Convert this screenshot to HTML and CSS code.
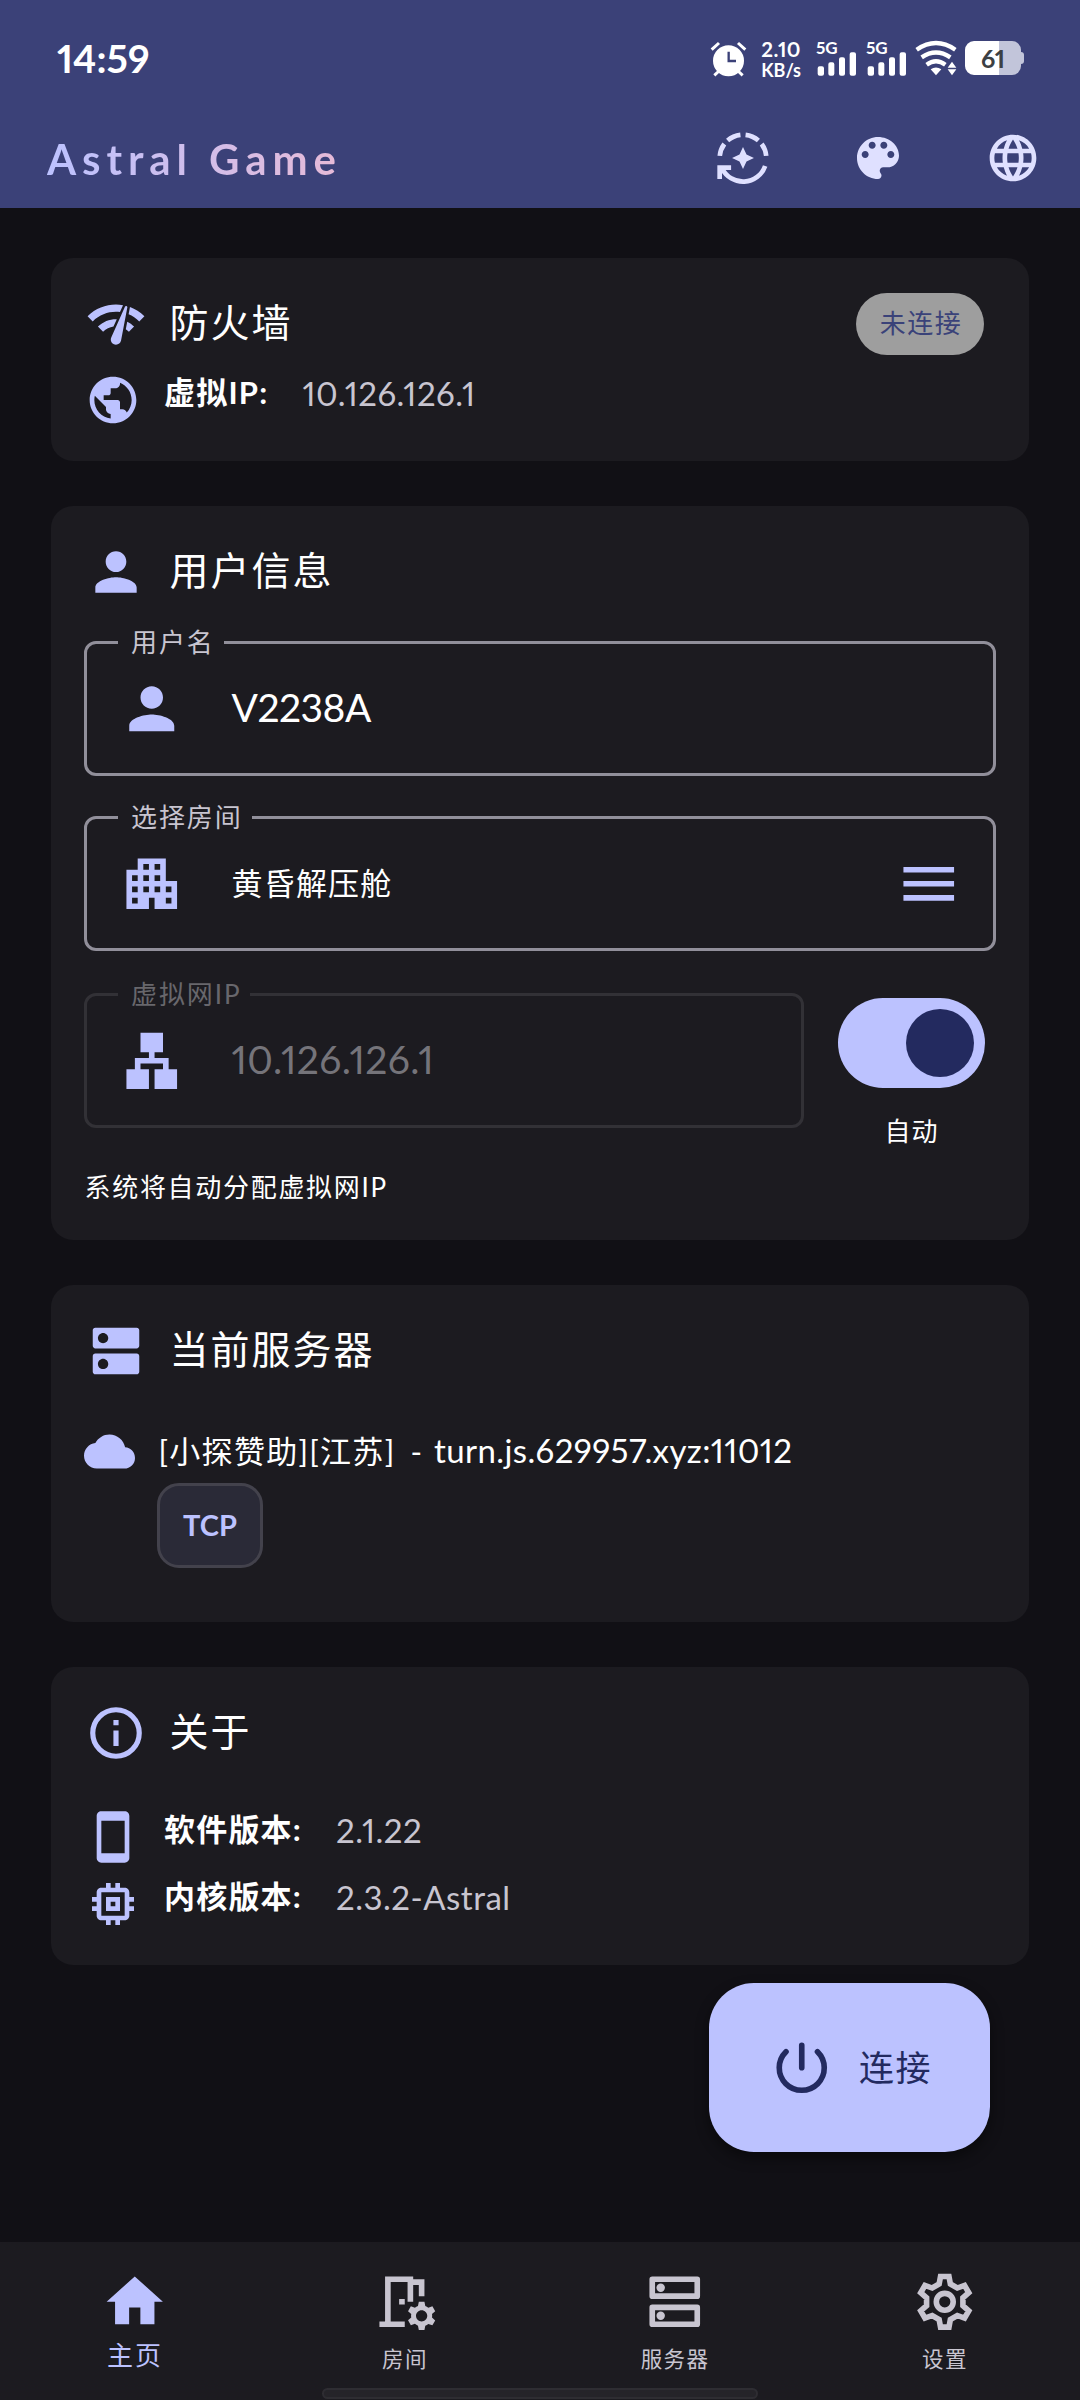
FILE: index.html
```html
<!DOCTYPE html>
<html lang="zh-CN">
<head>
<meta charset="utf-8">
<title>Astral Game</title>
<link rel="stylesheet" href="styles.css">
</head>
<body>
<div class="screen">
  <header class="header">
    <div class="status">
      <span class="clock">14:59</span>
      <div class="status-icons">
        <svg class="st-alarm" viewBox="90 120 111 111"><circle cx="145.500" cy="182" r="46.500" fill="#fff"/><path d="M146 155v28h22" fill="none" stroke="#3b4178" stroke-width="7"/><path d="M95 149l22-20M196 149l-22-20M103 226l14-13M188 226l-14-13" stroke="#fff" stroke-width="9" fill="none"/></svg>
        <div class="speed"><span class="speed-n">2.10</span><span class="speed-u">KB/s</span></div>
        <div class="signal"><span class="net">5G</span><svg class="bars" viewBox="0 0 120 75"><path d="M11 43h7a6 6 0 0 1 6 6v16a6 6 0 0 1-6 6h-7a6 6 0 0 1-6-6V49a6 6 0 0 1 6-6zM43 31h6a6 6 0 0 1 6 6v28a6 6 0 0 1-6 6h-6a6 6 0 0 1-6-6V37a6 6 0 0 1 6-6zM75 16h6a6 6 0 0 1 6 6v43a6 6 0 0 1-6 6h-6a6 6 0 0 1-6-6V22a6 6 0 0 1 6-6zM107 1h7a6 6 0 0 1 6 6v58a6 6 0 0 1-6 6h-7a6 6 0 0 1-6-6V7a6 6 0 0 1 6-6z"/></svg></div>
        <div class="signal"><span class="net">5G</span><svg class="bars" viewBox="0 0 120 75"><path d="M11 43h7a6 6 0 0 1 6 6v16a6 6 0 0 1-6 6h-7a6 6 0 0 1-6-6V49a6 6 0 0 1 6-6zM43 31h6a6 6 0 0 1 6 6v28a6 6 0 0 1-6 6h-6a6 6 0 0 1-6-6V37a6 6 0 0 1 6-6zM75 16h6a6 6 0 0 1 6 6v43a6 6 0 0 1-6 6h-6a6 6 0 0 1-6-6V22a6 6 0 0 1 6-6zM107 1h7a6 6 0 0 1 6 6v58a6 6 0 0 1-6 6h-7a6 6 0 0 1-6-6V7a6 6 0 0 1 6-6z"/></svg></div>
        <svg class="st-wifi" viewBox="705 120 126 111"><g fill="none" stroke="#fff" stroke-width="13"><path d="M710 149q58-40 116 0"/><path d="M725 172q43-29 86 0"/><path d="M740 194q28-20 56 0"/></g><path d="M752 208q16-11 32 0l-16 18z" fill="#fff"/><path d="M816 172l20 30v30h-39v-30z" fill="#3b4178"/><path d="M803 203l13-18 13 18zM803 208l13 18 13-18z" fill="#fff"/></svg>
        <div class="battery"><span>61</span></div>
      </div>
    </div>
    <div class="appbar">
      <h1 class="brand">Astral Game</h1>
      <div class="actions">
        <svg class="i20" viewBox="0 0 24 24"><g fill="none" stroke="currentColor" stroke-width="2"><path d="M21.500 15.400A10 10 0 0 1 3 16.400"/><path d="M13.100 2.060A10 10 0 0 1 18.600 4.500M20 6A10 10 0 0 1 21.950 11.100M10.900 2.060A10 10 0 0 0 5.400 4.500M4 6A10 10 0 0 0 2.050 11.100"/><path d="M2 21v-4.900h4.900"/></g><path d="M12 7.300l1.500 3.200 3.200 1.500-3.200 1.500L12 16.700l-1.500-3.200L7.300 12l3.200-1.500z"/></svg>
        <svg class="i20" viewBox="0 0 24 24"><path d="M12 3c-4.970 0-9 4.030-9 9s4.030 9 9 9c.83 0 1.500-.67 1.500-1.500 0-.39-.15-.74-.39-1.010-.23-.26-.38-.61-.38-.99 0-.83.67-1.500 1.500-1.500H16c2.760 0 5-2.240 5-5 0-4.420-4.030-8-9-8zm-5.500 9c-.83 0-1.500-.67-1.500-1.500S5.670 9 6.500 9 8 9.670 8 10.500 7.330 12 6.500 12zm3-4C8.670 8 8 7.330 8 6.500S8.670 5 9.500 5s1.500.67 1.500 1.500S10.330 8 9.500 8zm5 0c-.83 0-1.500-.67-1.500-1.500S13.670 5 14.500 5s1.500.67 1.500 1.500S15.330 8 14.500 8zm3 4c-.83 0-1.500-.67-1.500-1.500S16.670 9 17.500 9s1.500.67 1.500 1.500-.67 1.500-1.500 1.500z"/></svg>
        <svg class="i20" viewBox="0 0 24 24"><path d="M11.990 2C6.470 2 2 6.480 2 12s4.470 10 9.990 10C17.520 22 22 17.520 22 12S17.520 2 11.990 2zm6.930 6h-2.950c-.32-1.250-.78-2.450-1.380-3.560 1.840.63 3.370 1.910 4.330 3.560zM12 4.040c.83 1.200 1.480 2.530 1.910 3.960h-3.820c.43-1.430 1.080-2.760 1.910-3.960zM4.260 14C4.100 13.360 4 12.690 4 12s.1-1.360.26-2h3.380c-.08.66-.14 1.320-.14 2 0 .68.06 1.340.14 2H4.260zm.82 2h2.950c.32 1.250.78 2.450 1.380 3.560-1.840-.63-3.370-1.900-4.330-3.560zm2.950-8H5.080c.96-1.660 2.490-2.930 4.330-3.560C8.810 5.550 8.350 6.750 8.030 8zM12 19.960c-.83-1.200-1.480-2.530-1.910-3.960h3.820c-.43 1.430-1.080 2.760-1.910 3.960zM14.340 14H9.660c-.09-.66-.16-1.320-.16-2 0-.68.07-1.350.16-2h4.680c.09.65.16 1.320.16 2 0 .68-.07 1.340-.16 2zm.25 5.560c.6-1.110 1.060-2.310 1.380-3.560h2.950c-.96 1.650-2.490 2.930-4.330 3.560zM16.360 14c.08-.66.14-1.320.14-2 0-.68-.06-1.340-.14-2h3.380c.16.64.26 1.310.26 2s-.1 1.360-.26 2h-3.380z"/></svg>
      </div>
    </div>
  </header>

  <main class="content">
    <section class="card firewall">
      <div class="card-head">
        <svg class="i22" viewBox="0 0 24 24"><path d="M15.900 5c-.17 0-.32.09-.41.23l-.07.15-5.180 11.650c-.16.29-.26.61-.26.96 0 1.110.9 2.010 2.010 2.010.96 0 1.770-.68 1.960-1.590l.01-.03L16.400 5.500c0-.28-.22-.5-.5-.5zM1 9l2 2c2.880-2.880 6.790-4.080 10.530-3.620l1.190-2.680C9.890 3.840 4.740 5.270 1 9zm20 2l2-2c-1.640-1.640-3.550-2.820-5.590-3.570l-.53 2.820c1.500.62 2.900 1.530 4.120 2.750zm-4 4l2-2c-.8-.8-1.700-1.420-2.660-1.890l-.55 2.920c.42.27.83.59 1.210.97zM5 13l2 2c1.130-1.130 2.560-1.790 4.030-2l1.280-2.880c-2.630-.08-5.300.87-7.310 2.880z"/></svg>
        <h2>防火墙</h2>
        <span class="badge">未连接</span>
      </div>
      <div class="row">
        <svg class="i20" viewBox="0 0 24 24"><path d="M12 2C6.480 2 2 6.480 2 12s4.480 10 10 10 10-4.480 10-10S17.520 2 12 2zm-1 17.930c-3.950-.49-7-3.850-7-7.930 0-.62.08-1.210.21-1.790L9 15v1c0 1.100.9 2 2 2v1.930zm6.900-2.540c-.26-.81-1-1.390-1.900-1.390h-1v-3c0-.55-.45-1-1-1H8v-2h2c.55 0 1-.45 1-1V7h2c1.100 0 2-.9 2-2v-.41c2.930 1.190 5 4.060 5 7.410 0 2.080-.8 3.970-2.100 5.390z"/></svg>
        <span class="key">虚拟IP:</span><span class="val">10.126.126.1</span>
      </div>
    </section>

    <section class="card user">
      <div class="card-head">
        <svg class="i22" viewBox="0 0 24 24"><path d="M12 12c2.210 0 4-1.790 4-4s-1.790-4-4-4-4 1.790-4 4 1.790 4 4 4zm0 2c-2.670 0-8 1.340-8 4v2h16v-2c0-2.660-5.330-4-8-4z"/></svg>
        <h2>用户信息</h2>
      </div>
      <div class="field">
        <span class="label">用户名</span>
        <svg class="i24" viewBox="0 0 24 24"><path d="M12 12c2.210 0 4-1.790 4-4s-1.790-4-4-4-4 1.790-4 4 1.790 4 4 4zm0 2c-2.670 0-8 1.340-8 4v2h16v-2c0-2.660-5.330-4-8-4z"/></svg>
        <span class="input latin name">V2238A</span>
      </div>
      <div class="field">
        <span class="label">选择房间</span>
        <svg class="i24" viewBox="0 0 24 24"><path d="M17 11V3H7v4H3v14h8v-4h2v4h8V11h-4zM7 19H5v-2h2v2zm0-4H5v-2h2v2zm0-4H5V9h2v2zm4 4H9v-2h2v2zm0-4H9V9h2v2zm0-4H9V5h2v2zm4 8h-2v-2h2v2zm0-4h-2V9h2v2zm0-4h-2V5h2v2zm4 12h-2v-2h2v2zm0-4h-2v-2h2v2z"/></svg>
        <span class="input">黄昏解压舱</span>
        <svg class="i24 menu" viewBox="0 0 24 24"><path d="M3 18h18v-2H3v2zm0-5h18v-2H3v2zm0-7v2h18V6H3z"/></svg>
      </div>
      <div class="ip-row">
        <div class="field disabled">
          <span class="label">虚拟网IP</span>
          <svg class="i24" viewBox="0 0 24 24"><path d="M13 22h8v-7h-3v-4h-5V9h3V2H8v7h3v2H6v4H3v7h8v-7H8v-2h8v2h-3z"/></svg>
          <span class="input latin">10.126.126.1</span>
        </div>
        <div class="auto">
          <div class="switch"><div class="thumb"></div></div>
          <span class="auto-label">自动</span>
        </div>
      </div>
      <p class="hint">系统将自动分配虚拟网IP</p>
    </section>

    <section class="card server">
      <div class="card-head">
        <svg class="i22" viewBox="0 0 24 24"><path d="M20 13H4c-.55 0-1 .45-1 1v6c0 .55.45 1 1 1h16c.55 0 1-.45 1-1v-6c0-.55-.45-1-1-1zM7 19c-1.100 0-2-.9-2-2s.9-2 2-2 2 .9 2 2-.9 2-2 2zM20 3H4c-.55 0-1 .45-1 1v6c0 .55.45 1 1 1h16c.55 0 1-.45 1-1V4c0-.55-.45-1-1-1zM7 9c-1.100 0-2-.9-2-2s.9-2 2-2 2 .9 2 2-.9 2-2 2z"/></svg>
        <h2>当前服务器</h2>
      </div>
      <div class="server-row">
        <svg class="i18" viewBox="0 0 24 24"><path d="M19.350 10.040C18.670 6.590 15.640 4 12 4 9.110 4 6.600 5.640 5.350 8.040 2.340 8.360 0 10.910 0 14c0 3.310 2.690 6 6 6h13c2.760 0 5-2.240 5-5 0-2.640-2.050-4.780-4.650-4.960z"/></svg>
        <div class="server-info">
          <span class="server-name"><span class="cjk">[小探赞助][江苏]</span><span class="dash">-</span><span class="host">turn.js.629957.xyz:11012</span></span>
          <span class="proto">TCP</span>
        </div>
      </div>
    </section>

    <section class="card about">
      <div class="card-head">
        <svg class="i22" viewBox="0 0 24 24"><circle cx="12" cy="12" r="9" fill="none" stroke="currentColor" stroke-width="2"/><path d="M11 7h2v2h-2zM11 11h2v6h-2z"/></svg>
        <h2>关于</h2>
      </div>
      <div class="row">
        <svg class="i20" viewBox="0 0 24 24"><path d="M17 1.010L7 1c-1.100 0-1.990.9-1.990 2v18c0 1.100.89 2 1.990 2h10c1.100 0 2-.9 2-2V3c0-1.100-.9-1.990-2-1.990zM17 19H7V5h10v14z"/></svg>
        <span class="key">软件版本:</span><span class="val">2.1.22</span>
      </div>
      <div class="row">
        <svg class="i20" viewBox="0 0 24 24"><path d="M15 9H9v6h6V9zm-2 4h-2v-2h2v2zm8-2V9h-2V7c0-1.100-.9-2-2-2h-2V3h-2v2h-2V3H9v2H7c-1.100 0-2 .9-2 2v2H3v2h2v2H3v2h2v2c0 1.100.9 2 2 2h2v2h2v-2h2v2h2v-2h2c1.100 0 2-.9 2-2v-2h2v-2h-2v-2h2zm-4 6H7V7h10v10z"/></svg>
        <span class="key">内核版本:</span><span class="val">2.3.2-Astral</span>
      </div>
    </section>

    <button class="fab">
      <svg class="i24" viewBox="0 0 24 24"><path d="M6.400 6.300A8 8 0 1 0 17.600 6.300M12 4v8" fill="none" stroke="currentColor" stroke-width="2" stroke-linecap="round"/></svg>
      <span>连接</span>
    </button>
  </main>

  <nav class="nav">
    <div class="tab active"><svg class="i24" viewBox="0 0 24 24"><path d="M10 20v-6h4v6h5v-8h3L12 3 2 12h3v8z"/></svg><span>主页</span></div>
    <div class="tab"><svg class="i24" viewBox="0 0 24 24"><path d="M3 21v-2h2V3h10v1h4v6h-2V6h-2v6h-2V5H7v14h5v2zM10 11h2v2h-2z"/><path d="M21.690 16.370l1.140-1-1-1.730-1.450.49c-.32-.27-.68-.48-1.080-.63L19 12h-2l-.3 1.490c-.4.15-.76.36-1.080.63l-1.450-.49-1 1.730 1.140 1c-.08.5-.08.76 0 1.260l-1.140 1 1 1.730 1.450-.49c.32.27.68.48 1.080.63L17 22h2l.3-1.490c.4-.15.76-.36 1.080-.63l1.450.49 1-1.730-1.140-1c.08-.51.08-.77 0-1.270zM18 19c-1.100 0-2-.9-2-2s.9-2 2-2 2 .9 2 2-.9 2-2 2z"/></svg><span>房间</span></div>
    <div class="tab"><svg class="i24" viewBox="0 0 24 24"><g fill="none" stroke="currentColor" stroke-width="2" stroke-linejoin="round"><path d="M4 4h16v6H4zM4 14h16v6H4z"/></g><circle cx="7" cy="7" r="1.500"/><circle cx="7" cy="17" r="1.500"/></svg><span>服务器</span></div>
    <div class="tab"><svg class="i24" viewBox="-12 -12 24 24"><g fill="none" stroke="currentColor" stroke-width="2"><path d="M-2-6.300L-1.500-9H1.500L2-6.300 4.460-4.880 7.040-5.800 8.540-3.200 6.460-1.420V1.420L8.540 3.200 7.040 5.800 4.460 4.880 2 6.300 1.500 9H-1.500L-2 6.300-4.460 4.880-7.040 5.800-8.540 3.200-6.460 1.420V-1.420L-8.540-3.200-7.040-5.800-4.460-4.880z"/><circle r="3"/></g></svg><span>设置</span></div>
    <div class="home-bar"></div>
  </nav>
</div>
</body>
</html>
```
FILE: styles.css
```css
* { box-sizing: border-box; }
body { margin: 0; background: #111015; }
h1, h2, p { margin: 0; font-weight: 400; }
svg { display: block; flex: none; fill: currentColor; }
.screen {
  width: 1080px; height: 2400px; display: flex; flex-direction: column; overflow: hidden;
  background: #111015; color: #fff;
  font-family: Lato, "Noto Sans CJK SC", sans-serif;
  font-variant-numeric: proportional-nums;
}
.i18 { width: 51px; height: 51px; }
.i20 { width: 56px; height: 56px; }
.i22 { width: 62px; height: 62px; }
.i24 { width: 67.5px; height: 67.5px; }

/* header */
.header { height: 208px; background: #3b4178; flex: none; }
.status { height: 116px; padding: 0 59px 0 57px; display: flex; justify-content: space-between; align-items: center; }
.clock { font-size: 39px; font-weight: 700; line-height: 46px; letter-spacing: 0; }
.status-icons { display: flex; align-items: center; height: 38px; }
.st-alarm { width: 37px; height: 37px; }
.speed { width: 42px; margin-left: 12px; padding-top: 3px; display: flex; flex-direction: column; align-items: flex-end; font-weight: 700; }
.speed-n { font-size: 20.5px; line-height: 21px; letter-spacing: .5px; }
.speed-u { font-size: 18px; line-height: 21px; }
.signal { width: 40px; height: 37px; margin-left: 10px; position: relative; }
.signal:nth-of-type(2) { margin-left: 15px; }
.net { position: absolute; left: 0; top: 0; font-size: 17px; font-weight: 700; line-height: 15px; }
.bars { position: absolute; left: 0; bottom: 0; width: 40px; height: 25px; }
.st-wifi { width: 42px; height: 37px; margin-left: 9px; }
.battery {
  width: 56px; height: 34px; margin-left: 8px; border-radius: 9px; position: relative;
  background: linear-gradient(90deg, #fff 34px, #c2c5da 34px);
  color: #3c4043; font-size: 25px; font-weight: 700; line-height: 35px; text-align: center;
}
.battery::after { content: ""; position: absolute; right: -3px; top: 11px; width: 3px; height: 12px; background: #c2c5da; border-radius: 0 3px 3px 0; }
.appbar { height: 84px; padding: 0 39px 0 47px; display: flex; justify-content: space-between; align-items: center; }
.brand {
  font-size: 42px; font-weight: 700; line-height: 52px; padding-top: 2px; letter-spacing: 5.9px;
  background: linear-gradient(90deg, #bcc2ff, #e6bad7);
  -webkit-background-clip: text; background-clip: text; color: transparent;
}
.actions { display: flex; gap: 79px; color: #dfe0ff; }

/* cards */
.content { flex: 1; padding: 50px 51px 0; display: flex; flex-direction: column; gap: 45px; }
.card { background: #1c1b20; border-radius: 22px; padding: 35px 33px 0; flex: none; }
.card svg { color: #bcc2ff; }
.firewall { height: 203px; }
.user { height: 734px; }
.server { height: 337px; }
.about { height: 298px; }
.card-head { height: 62px; display: flex; align-items: center; padding-left: .5px; }
.card-head h2 { margin-left: 23px; padding-bottom: 4px; font-size: 39px; line-height: 58px; letter-spacing: 2px; }
.badge {
  margin-left: auto; margin-right: 12px; width: 128px; height: 62px; border-radius: 31px; padding-left: 2px;
  background: #9e9e9e; color: #3a4279; font-size: 26px; line-height: 61px; letter-spacing: 1.5px; text-align: center;
}
.row { display: flex; align-items: flex-start; height: 67px; padding-left: .5px; }
.card-head + .row { margin-top: 45px; }
.firewall .card-head + .row { margin-top: 17px; }
.key { margin-left: 23.5px; font-size: 31px; font-weight: 700; line-height: 41px; letter-spacing: 1.2px; }
.val { margin-left: 34px; font-size: 33px; line-height: 42px; letter-spacing: .5px; color: #c8c5d0; }

.field { position: relative; height: 135px; border: 3px solid #918f9a; border-radius: 12px; display: flex; align-items: center; padding: 0 31px; }
.card-head + .field { margin-top: 38px; }
.field + .field { margin-top: 40px; }
.label {
  position: absolute; left: 31px; top: -20px; height: 36px; padding: 0 9px 0 13px; background: #1c1b20;
  font-size: 26px; line-height: 36px; letter-spacing: 1.9px; color: #c8c5d0;
}
.input { margin-left: 46px; padding-bottom: 2px; font-size: 31px; line-height: 48px; letter-spacing: 1.2px; }
.input.latin { padding-bottom: 4px; font-size: 39px; letter-spacing: .4px; }
.input.name { letter-spacing: -.5px; }
.menu { margin-left: auto; }
.ip-row { display: flex; margin-top: 42px; }
.ip-row .field { width: 720px; }
.field.disabled { border-color: #323136; }
.disabled .label { color: #68676c; }
.disabled .input { color: #75747a; }
.auto { width: 147px; margin-left: 34px; padding-top: 5px; display: flex; flex-direction: column; align-items: center; }
.switch { width: 147px; height: 90px; border-radius: 45px; background: #bcc2ff; padding: 11px; display: flex; justify-content: flex-end; }
.thumb { width: 68px; height: 68px; border-radius: 50%; background: #232a5f; }
.auto-label { margin-top: 25px; font-size: 26px; line-height: 36px; letter-spacing: 1px; }
.hint { margin-top: 20px; padding-left: .5px; font-size: 26px; line-height: 36px; letter-spacing: 1.7px; }

.server-row { display: flex; margin-top: 44px; }
.server-info { margin-left: 22px; display: flex; flex-direction: column; align-items: flex-start; }
.server-name { padding-left: 1.5px; font-size: 31px; line-height: 48px; }
.cjk { letter-spacing: 1.3px; }
.dash { margin: 0 12px 0 15px; }
.host { font-size: 33px; letter-spacing: .4px; }
.proto {
  margin-top: 8px; width: 106px; height: 85px; border: 3px solid #43424c; border-radius: 22px; background: #2a2a37;
  color: #bcc2ff; font-size: 29px; font-weight: 700; line-height: 78px; text-align: center;
}

.fab {
  align-self: flex-end; margin: -27px 39px 0 0; width: 281px; height: 169px; border: 0; border-radius: 45px;
  background: #bcc2ff; color: #232a5f; display: flex; align-items: center; padding: 0 0 0 59px; font: inherit;
  box-shadow: 0 6px 14px rgba(0, 0, 0, .45);
}
.fab span { margin-left: 23.5px; padding-bottom: 2px; font-size: 35px; line-height: 50px; letter-spacing: 1.5px; }

/* bottom navigation */
.nav { position: relative; height: 158px; flex: none; background: #1c1b20; display: flex; padding-top: 26px; }
.tab { width: 270px; display: flex; flex-direction: column; align-items: center; color: #c8c5d0; }
.tab span { margin-top: 8px; font-size: 21.5px; line-height: 30px; letter-spacing: 1.4px; }
.tab.active { color: #bcc2ff; }
.tab.active span { margin-top: 4px; font-size: 26px; letter-spacing: 2px; }
.home-bar { position: absolute; left: 322px; bottom: 1px; width: 436px; height: 11px; border: 2px solid #2e2d32; border-radius: 6px; background: #252429; }
```
